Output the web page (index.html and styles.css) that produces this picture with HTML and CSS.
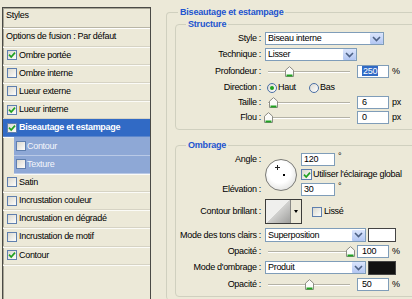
FILE: index.html
```html
<!DOCTYPE html>
<html>

	<head>
		<meta charset="UTF-8">
		<title>Style de calque</title>
		<link rel="stylesheet" href="styles.css">
	</head>

	<body>
		<div class="dlg">
			<!-- liste des effets -->
			<div class="styles">
				<div class="styles-head">Styles</div>
				<div class="styles-row opts">Options de fusion : Par défaut</div>
				<div class="styles-row"><span class="cb"><svg viewBox="0 0 8 8"><path d="M1 3.6 L3.2 6 L7 1.6" /></svg></span>Ombre portée</div>
				<div class="styles-row"><span class="cb"></span>Ombre interne</div>
				<div class="styles-row"><span class="cb"></span>Lueur externe</div>
				<div class="styles-row"><span class="cb"><svg viewBox="0 0 8 8"><path d="M1 3.6 L3.2 6 L7 1.6" /></svg></span>Lueur interne</div>
				<div class="styles-row sel"><span class="cb"><svg viewBox="0 0 8 8"><path d="M1 3.6 L3.2 6 L7 1.6" /></svg></span>Biseautage et estampage</div>
				<div class="styles-row sub"><span class="cb"></span>Contour</div>
				<div class="styles-row sub"><span class="cb"></span>Texture</div>
				<div class="styles-row"><span class="cb"></span>Satin</div>
				<div class="styles-row"><span class="cb"></span>Incrustation couleur</div>
				<div class="styles-row"><span class="cb"></span>Incrustation en dégradé</div>
				<div class="styles-row"><span class="cb"></span>Incrustation de motif</div>
				<div class="styles-row"><span class="cb"><svg viewBox="0 0 8 8"><path d="M1 3.6 L3.2 6 L7 1.6" /></svg></span>Contour</div>
			</div>

			<!-- réglages -->
			<div class="main">
				<fieldset class="grp outer">
					<legend>Biseautage et estampage</legend>

					<fieldset class="grp inner struct">
						<legend>Structure</legend>
						<div class="row r1">
							<span class="lbl">Style :</span>
							<div class="select w-style"><span>Biseau interne</span><i class="arrow"><svg width="9" height="6" viewBox="0 0 9 6"><path d="M1 1 L4.5 4.5 L8 1" /></svg></i></div>
						</div>
						<div class="row r2">
							<span class="lbl">Technique :</span>
							<div class="select w-tech"><span>Lisser</span><i class="arrow"><svg width="9" height="6" viewBox="0 0 9 6"><path d="M1 1 L4.5 4.5 L8 1" /></svg></i></div>
						</div>
						<div class="row r3">
							<span class="lbl">Profondeur :</span>
							<div class="slider"><div class="track"></div><i class="thumb" style="left:25%"><svg width="9" height="11" viewBox="0 0 9 11"><path class="th-body" d="M0.5 10.5 V4.2 L4.5 0.6 L8.5 4.2 V10.5 Z" /><path class="th-base" d="M1.5 9.5 H7.5" /></svg></i></div>
							<div class="field"><span class="hl">250</span></div>
							<span class="unit">%</span>
						</div>
						<div class="row r4">
							<span class="lbl">Direction :</span>
							<span class="opt first"><span class="radio on"></span>Haut</span>
							<span class="opt"><span class="radio"></span>Bas</span>
						</div>
						<div class="row r5">
							<span class="lbl">Taille :</span>
							<div class="slider"><div class="track"></div><i class="thumb" style="left:6%"><svg width="9" height="11" viewBox="0 0 9 11"><path class="th-body" d="M0.5 10.5 V4.2 L4.5 0.6 L8.5 4.2 V10.5 Z" /><path class="th-base" d="M1.5 9.5 H7.5" /></svg></i></div>
							<div class="field">6</div>
							<span class="unit">px</span>
						</div>
						<div class="row r5">
							<span class="lbl">Flou :</span>
							<div class="slider"><div class="track"></div><i class="thumb" style="left:0%"><svg width="9" height="11" viewBox="0 0 9 11"><path class="th-body" d="M0.5 10.5 V4.2 L4.5 0.6 L8.5 4.2 V10.5 Z" /><path class="th-base" d="M1.5 9.5 H7.5" /></svg></i></div>
							<div class="field">0</div>
							<span class="unit">px</span>
						</div>
					</fieldset>

					<fieldset class="grp inner shade">
						<legend>Ombrage</legend>
						<div class="angle">
							<span class="lbl a-lbl">Angle :</span>
							<div class="dial"></div>
							<div class="a-cell"><div class="field small">120</div><span class="unit deg">°</span></div>
							<div class="a-cell a-check"><span class="cb"><svg viewBox="0 0 8 8"><path d="M1 3.6 L3.2 6 L7 1.6" /></svg></span>Utiliser l'éclairage global</div>
							<span class="lbl e-lbl">Elévation :</span>
							<div class="a-cell e-cell"><div class="field small">30</div><span class="unit deg">°</span></div>
						</div>
						<div class="row r-contour">
							<span class="lbl">Contour brillant :</span>
							<div class="contour"><div class="curve"></div><div class="drop"></div></div>
							<span class="lisse"><span class="cb"></span>Lissé</span>
						</div>
						<div class="row r-mode1">
							<span class="lbl">Mode des tons clairs :</span>
							<div class="select w-mode"><span>Superposition</span><i class="arrow"><svg width="9" height="6" viewBox="0 0 9 6"><path d="M1 1 L4.5 4.5 L8 1" /></svg></i></div>
							<div class="swatch white"></div>
						</div>
						<div class="row r-op1">
							<span class="lbl">Opacité :</span>
							<div class="slider"><div class="track"></div><i class="thumb" style="left:100%"><svg width="9" height="11" viewBox="0 0 9 11"><path class="th-body" d="M0.5 10.5 V4.2 L4.5 0.6 L8.5 4.2 V10.5 Z" /><path class="th-base" d="M1.5 9.5 H7.5" /></svg></i></div>
							<div class="field">100</div>
							<span class="unit">%</span>
						</div>
						<div class="row r-mode2">
							<span class="lbl">Mode d'ombrage :</span>
							<div class="select w-mode"><span>Produit</span><i class="arrow"><svg width="9" height="6" viewBox="0 0 9 6"><path d="M1 1 L4.5 4.5 L8 1" /></svg></i></div>
							<div class="swatch black"></div>
						</div>
						<div class="row r-op2">
							<span class="lbl">Opacité :</span>
							<div class="slider"><div class="track"></div><i class="thumb" style="left:50%"><svg width="9" height="11" viewBox="0 0 9 11"><path class="th-body" d="M0.5 10.5 V4.2 L4.5 0.6 L8.5 4.2 V10.5 Z" /><path class="th-base" d="M1.5 9.5 H7.5" /></svg></i></div>
							<div class="field">50</div>
							<span class="unit">%</span>
						</div>
					</fieldset>
				</fieldset>
			</div>
		</div>
	</body>

</html>
```

FILE: styles.css
```css
html,
body {
	margin: 0;
	overflow: hidden;
}

body {
	width: 412px;
	height: 299px;
	background-color: #ece9d8;
	color: #000;
	font-family: "Liberation Sans", Arial, sans-serif;
	font-size: 9px;
	line-height: 11px;
	letter-spacing: -0.3px;
}

.dlg {
	display: flex;
	align-items: flex-start;
	height: 299px;
	overflow: hidden;
}

/* liste de gauche */
.styles {
	box-sizing: border-box;
	width: 149px;
	height: 292px;
	margin: 7px 0 0 2px;
	border: 1px solid #4a4a46;
	border-bottom: none;
	box-shadow: inset 1px 1px 0 #a7a595;
	flex: none;
}

.styles-head {
	box-sizing: border-box;
	height: 20px;
	padding-left: 3px;
	line-height: 14px;
	border-bottom: 1px solid #b9b6a6;
	box-shadow: 0 1px 0 #fff;
}

.styles-row {
	box-sizing: border-box;
	display: flex;
	align-items: center;
	height: 18.2px;
	padding-left: 4px;
	border-bottom: 1px solid #d6d3c4;
	box-shadow: 0 1px 0 #fbfbf7;
}

.styles-row.opts {
	height: 18.5px;
	padding-left: 3px;
}

.styles-row.sel {
	background-color: #316ac5;
	color: #fff;
	font-weight: bold;
	border-bottom-color: #5b86cc;
}

.styles-row.sub {
	margin-left: 11px;
	padding-left: 2px;
	background-color: #8ea8d6;
	color: #f4f6fb;
	border-bottom-color: #b9c9e6;
}

.styles-row.sub .cb {
	margin-right: 1px;
}

/* case à cocher */
.cb {
	box-sizing: border-box;
	display: flex;
	align-items: center;
	justify-content: center;
	flex: none;
	width: 10px;
	height: 10px;
	margin-right: 2px;
	border: 1px solid #5f7fae;
	background: linear-gradient(135deg, #dad8cf, #fdfdfb);
}

.cb svg {
	width: 8px;
	height: 8px;
}

.cb path {
	fill: none;
	stroke: #21a121;
	stroke-width: 1.7;
}

/* partie droite */
.main {
	width: 262px;
	margin: 6px 0 0 15px;
	flex: none;
}

.grp {
	min-width: 0;
	margin: 0;
	padding: 0;
	border: 1px solid #d0d0bf;
	border-radius: 4px;
}

.grp legend {
	padding: 0 2px;
	line-height: 12px;
	color: #2254cf;
	font-weight: bold;
	letter-spacing: -0.2px;
}

.outer {
	height: 293px;
	border-bottom: none;
}

.outer > legend {
	margin-left: 11px;
}

.inner {
	margin-left: 8px;
}

.inner > legend {
	margin-left: 10px;
}

.struct {
	padding-bottom: 5px;
}

.shade {
	margin-top: 9px;
	padding-bottom: 5px;
}

.row {
	display: flex;
	align-items: center;
	height: 13px;
}

.lbl {
	width: 85px;
	margin-right: 4px;
	text-align: right;
	white-space: nowrap;
	flex: none;
}

.r1 {
	margin-top: 2px;
}

.r2 {
	margin-top: 3px;
}

.r3 {
	margin-top: 4px;
}

.r4 {
	margin-top: 3px;
}

.r5 {
	margin-top: 2px;
}

/* liste déroulante */
.select {
	box-sizing: border-box;
	display: flex;
	align-items: center;
	height: 13px;
	padding-left: 2px;
	border: 1px solid #7f9db9;
	background-color: #fff;
	flex: none;
}

.select span {
	flex: 1;
	white-space: nowrap;
}

.w-style {
	width: 119px;
}

.w-tech {
	width: 92px;
}

.w-mode {
	width: 101px;
}

.arrow {
	display: flex;
	align-items: center;
	justify-content: center;
	width: 13px;
	height: 11px;
	border-radius: 1px;
	background: linear-gradient(#dbe5fc, #b2c6f2);
}

.arrow path {
	fill: none;
	stroke: #4d6185;
	stroke-width: 1.6;
}

/* curseur */
.slider {
	position: relative;
	width: 82px;
	height: 13px;
	margin-left: 3px;
	flex: none;
}

.track {
	height: 1px;
	margin-top: 6px;
	background-color: #b4b2a6;
	border-bottom: 1px solid #fff;
}

.thumb {
	position: absolute;
	top: 1px;
	margin-left: -4px;
	line-height: 0;
}

.th-body {
	fill: #fbfbf9;
	stroke: #8c8c84;
}

.th-base {
	stroke: #21a121;
	stroke-width: 2;
}

.field {
	box-sizing: border-box;
	width: 32px;
	height: 13px;
	margin-left: 7px;
	padding-left: 4px;
	border: 1px solid #7f9db9;
	background-color: #fff;
	flex: none;
}

.field.small {
	width: 34px;
	margin-left: 0;
	padding-left: 2px;
}

.hl {
	padding: 0 1px;
	background-color: #316ac5;
	color: #fff;
}

.unit {
	margin-left: 3px;
}

.unit.deg {
	align-self: flex-start;
	margin-top: -2px;
}

/* boutons radio */
.opt {
	display: flex;
	align-items: center;
}

.opt.first {
	width: 42px;
	margin-left: 2px;
}

.radio {
	box-sizing: border-box;
	display: flex;
	align-items: center;
	justify-content: center;
	width: 10px;
	height: 10px;
	margin-right: 1px;
	border: 1px solid #4a6fa5;
	border-radius: 50%;
	background: linear-gradient(135deg, #dcdad2, #fff);
}

.radio.on::after {
	content: '';
	width: 4px;
	height: 4px;
	border-radius: 50%;
	background-color: #21a121;
}

/* angle */
.angle {
	display: grid;
	grid-template-columns: 85px 32px auto;
	grid-template-rows: 13px 17px 13px;
	column-gap: 4px;
	margin-top: 2px;
}

.angle .lbl {
	margin-right: 0;
	align-self: center;
}

.a-lbl {
	grid-column: 1;
	grid-row: 1;
}

.e-lbl {
	grid-column: 1;
	grid-row: 3;
}

.dial {
	position: relative;
	box-sizing: border-box;
	grid-column: 2;
	grid-row: 1 / 4;
	align-self: center;
	width: 32px;
	height: 32px;
	border: 1px solid #7a7a76;
	border-radius: 50%;
	background: radial-gradient(circle at 45% 40%, #fff 45%, #e6e6e4 75%, #c6c6c2 100%);
}

.dial::before {
	content: '';
	position: absolute;
	left: 9px;
	top: 5px;
	width: 5px;
	height: 5px;
	background:
		linear-gradient(#222, #222) center / 5px 1px no-repeat,
		linear-gradient(#222, #222) center / 1px 5px no-repeat;
}

.dial::after {
	content: '';
	position: absolute;
	left: 17px;
	top: 14px;
	width: 2px;
	height: 2px;
	background-color: #000;
}

.a-cell {
	display: flex;
	align-items: center;
	grid-column: 3;
	grid-row: 1;
}

.a-cell.a-check {
	grid-row: 2;
	white-space: nowrap;
}

.a-cell.e-cell {
	grid-row: 3;
}

.a-check .cb {
	width: 11px;
	height: 11px;
	margin-right: 1px;
}

/* contour brillant */
.r-contour {
	height: 25px;
	margin-top: 3px;
}

.contour {
	box-sizing: border-box;
	display: flex;
	height: 25px;
	border: 1px solid #3c3c3a;
	flex: none;
}

.curve {
	width: 24px;
	background: linear-gradient(to bottom right, #efefed 50%, #d2d2d0 50%, #9e9e9c);
}

.drop {
	display: flex;
	align-items: center;
	justify-content: center;
	width: 10px;
	border-left: 1px solid #8a8a86;
	background-color: #ece9d8;
}

.drop::after {
	content: '';
	border-top: 3px solid #000;
	border-left: 2.5px solid transparent;
	border-right: 2.5px solid transparent;
}

.lisse {
	display: flex;
	align-items: center;
	margin-left: 10px;
}

.r-mode1 {
	height: 14px;
	margin-top: 4px;
}

.r-mode1 .select {
	height: 14px;
}

.r-op1 {
	margin-top: 3px;
}

.r-mode2 {
	margin-top: 3px;
}

.r-op2 {
	margin-top: 4px;
}

.swatch {
	box-sizing: border-box;
	width: 28px;
	height: 14px;
	margin-left: 2px;
	border: 1px solid #444;
}

.swatch.white {
	background-color: #fff;
}

.swatch.black {
	background-color: #111;
}
```
